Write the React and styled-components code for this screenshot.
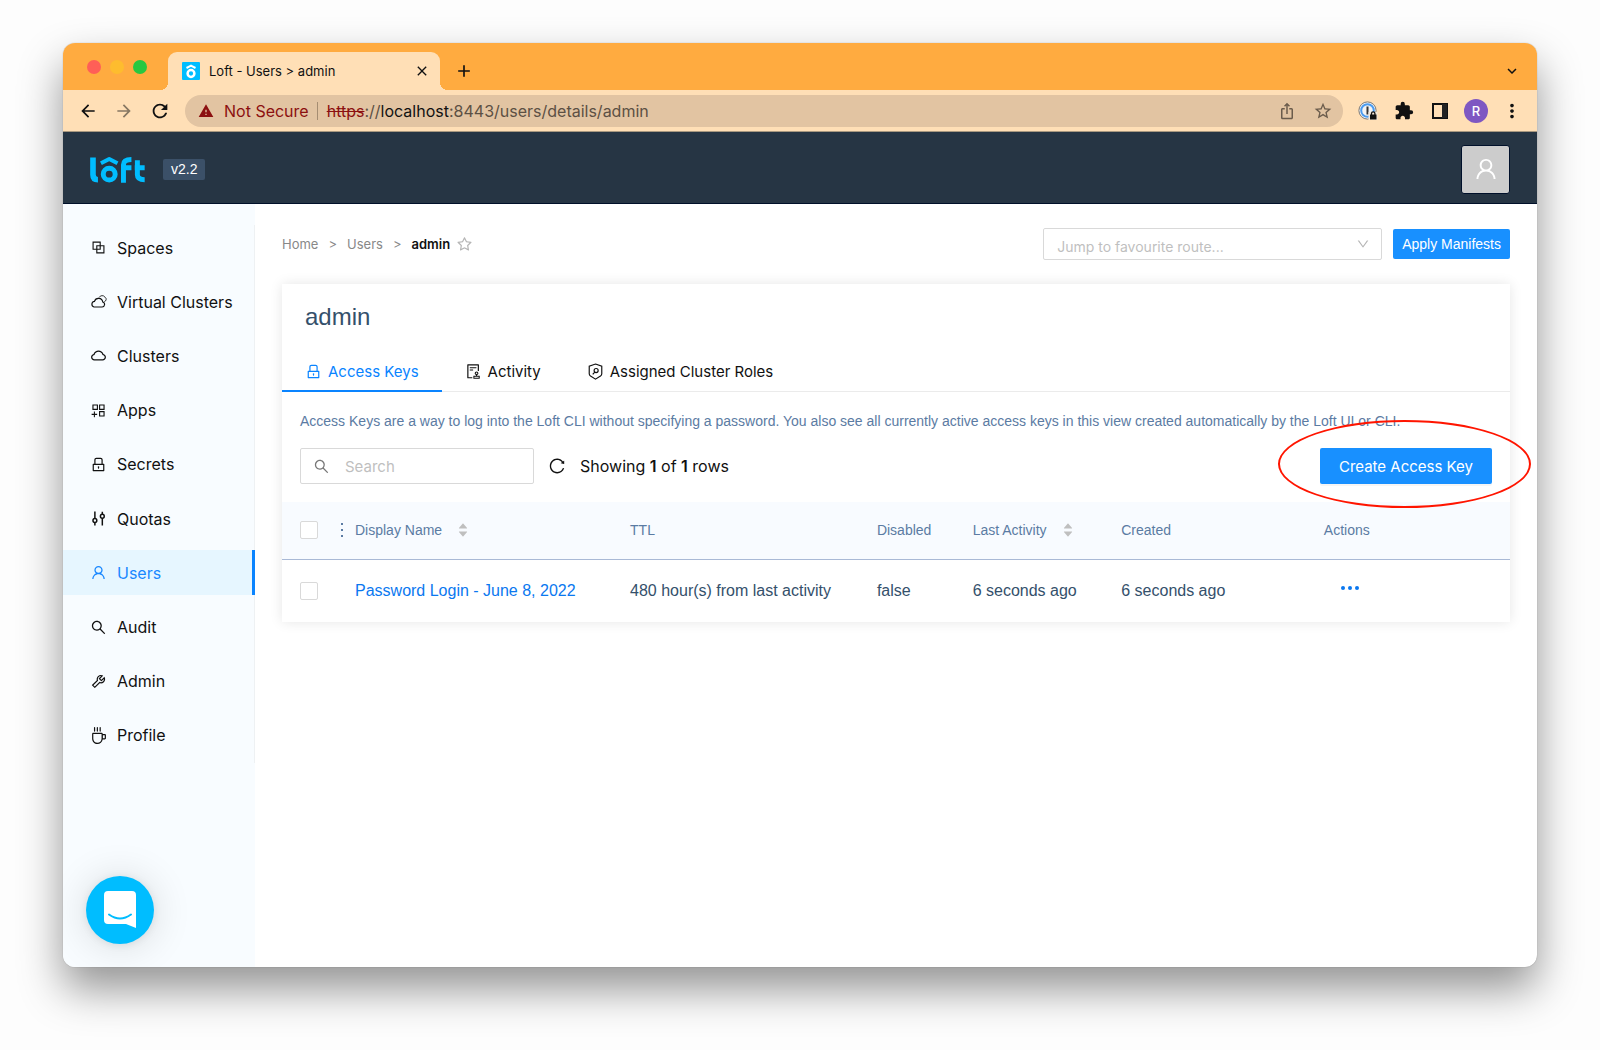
import React, { useState } from 'react';
import styled, { createGlobalStyle } from 'styled-components';
import {
    AiFillCaretDown,
    AiFillCaretUp,
    AiOutlineAppstoreAdd,
    AiOutlineAudit,
    AiOutlineBlock,
    AiOutlineCloud,
    AiOutlineCoffee,
    AiOutlineDown,
    AiOutlineLock,
    AiOutlineReload,
    AiOutlineSearch,
    AiOutlineStar,
    AiOutlineTool,
    AiOutlineUser,
} from 'react-icons/ai';
import {
    MdArrowBack,
    MdArrowForward,
    MdClose,
    MdAdd,
    MdExtension,
    MdIosShare,
    MdKeyboardArrowDown,
    MdMoreVert,
    MdRefresh,
    MdStarOutline,
    MdWarning,
} from 'react-icons/md';

const VirtualClusterIcon = () => (
    <svg viewBox="0 0 16 16" width="1em" height="1em" fill="none" stroke="currentColor">
        <path d="M3.8 13.2h7.6a2.4 2.4 0 0 0 .6-4.7 4 4 0 0 0-7.8-.6 2.7 2.7 0 0 0-.4 5.3z" strokeWidth="1.1" />
        <path d="M8.6 4.2a3.2 3.2 0 0 1 5.5-.3 2.3 2.3 0 0 1-.6 4.2" strokeWidth="0.8" />
    </svg>
);

const QuotaIcon = () => (
    <svg viewBox="0 0 16 16" width="1em" height="1em" fill="none" stroke="currentColor" strokeWidth="1.4">
        <path d="M4.6 1.5v6.6M4.6 11.7v2.8M11.6 14.5V7.7M11.6 4.1V1.7" />
        <circle cx="4.6" cy="9.9" r="1.8" />
        <circle cx="11.6" cy="5.9" r="1.8" />
    </svg>
);

const RolesIcon = () => (
    <svg viewBox="0 0 16 16" width="1em" height="1em" fill="none" stroke="currentColor" strokeWidth="1.1">
        <path d="M8 1l5.900 2v7.200c0 1-.5 1.600-1.200 2.100L8 15.200l-4.700-2.900c-.7-.5-1.200-1.100-1.200-2.100V3z" />
        <circle cx="8.6" cy="7.100" r="1.900" />
        <path d="M7.300 8.500l-1.900 2.200" />
    </svg>
);

const LoftLogo = () => (
    <svg viewBox="0 0 166 80" width="55" height="27" fill="none" stroke="#00bdff" role="img" aria-label="loft">
        <path d="M9 4v52q0 15 15 15" strokeWidth="17" />
        <circle cx="58" cy="54" r="18" strokeWidth="15" />
        <path d="M33 21L58 8l25 13" strokeWidth="12" strokeLinejoin="round" />
        <path d="M101 80V26q0-16 24-16M101 35h24" strokeWidth="15" />
        <path d="M143 12v44q0 15 22 15M135 35h30" strokeWidth="15" />
    </svg>
);

const Favicon = () => (
    <svg viewBox="0 0 18 18" width="18" height="18">
        <rect width="18" height="18" rx="1" fill="#00bdff" />
        <circle cx="9" cy="11.5" r="3.4" fill="none" stroke="#fff" strokeWidth="2.5" />
        <path d="M4.5 6L9 3.6 13.5 6" fill="none" stroke="#fff" strokeWidth="2" strokeLinejoin="round" />
    </svg>
);

const PasswordManagerIcon = () => (
    <svg viewBox="0 0 20 20" width="20" height="20">
        <circle cx="9.5" cy="9.5" r="8.6" fill="#f4f4f4" stroke="#777" />
        <circle cx="9.5" cy="9.5" r="6.3" fill="none" stroke="#4a9bf0" strokeWidth="2" />
        <rect x="8.5" y="5.5" width="2" height="8" fill="#333" />
        <path d="M10.5 11h9v8h-9z" fill="#f4e8da" />
        <path d="M12 13.5h6.5v5H12z" fill="#111" />
        <path d="M13.5 14v-1.500a1.700 1.700 0 0 1 3.400 0V14" fill="none" stroke="#111" strokeWidth="1.3" />
    </svg>
);

const SidePanelIcon = () => (
    <svg viewBox="0 0 16 16" width="16" height="16">
        <path d="M1 1h14v14H1z" fill="none" stroke="#111" strokeWidth="2" />
        <path d="M10 1h5v14h-5z" fill="#222" />
    </svg>
);

const ChatIcon = () => (
    <svg viewBox="0 0 32 38" width="32" height="38">
        <path d="M4 0h24a4 4 0 0 1 4 4v33l-10-4H4a4 4 0 0 1-4-4V4a4 4 0 0 1 4-4z" fill="#fff" />
        <path d="M5 23.5q11 8 22 0" fill="none" stroke="#00bdff" strokeWidth="2" strokeLinecap="round" />
    </svg>
);

const DotsIcon = () => (
    <svg viewBox="0 0 18 4" width="18" height="4" fill="currentColor">
        <circle cx="2" cy="2" r="2" />
        <circle cx="9" cy="2" r="2" />
        <circle cx="16" cy="2" r="2" />
    </svg>
);

const navItems = [
    { name: 'Spaces', icon: AiOutlineBlock },
    { name: 'Virtual Clusters', icon: VirtualClusterIcon },
    { name: 'Clusters', icon: AiOutlineCloud },
    { name: 'Apps', icon: AiOutlineAppstoreAdd },
    { name: 'Secrets', icon: AiOutlineLock },
    { name: 'Quotas', icon: QuotaIcon },
    { name: 'Users', icon: AiOutlineUser },
    { name: 'Audit', icon: AiOutlineSearch },
    { name: 'Admin', icon: AiOutlineTool },
    { name: 'Profile', icon: AiOutlineCoffee },
];

const tabs = [
    { name: 'Access Keys', icon: AiOutlineLock },
    { name: 'Activity', icon: AiOutlineAudit },
    { name: 'Assigned Cluster Roles', icon: RolesIcon },
];

const columns = [
    { name: 'Display Name', width: '22.4%', sortable: true },
    { name: 'TTL', width: '20.1%' },
    { name: 'Disabled', width: '7.8%' },
    { name: 'Last Activity', width: '12.1%', sortable: true },
    { name: 'Created', width: '16.5%' },
    { name: 'Actions' },
];

const rows = [
    {
        name: 'Password Login - June 8, 2022',
        ttl: '480 hour(s) from last activity',
        disabled: 'false',
        lastActivity: '6 seconds ago',
        created: '6 seconds ago',
    },
];

const BrowserChrome = () => (
    <>
        <TabStrip>
            <Lights>
                <Light color="#ff5f57" />
                <Light color="#febc2e" />
                <Light color="#28c840" />
            </Lights>
            <BrowserTab>
                <Favicon />
                <BrowserTabTitle>Loft - Users &gt; admin</BrowserTabTitle>
                <ChromeButton aria-label="Close tab" size={16}><MdClose /></ChromeButton>
            </BrowserTab>
            <StripActions>
                <ChromeButton aria-label="New tab" size={20}><MdAdd /></ChromeButton>
                <ChromeButton aria-label="Search tabs" size={18}><MdKeyboardArrowDown /></ChromeButton>
            </StripActions>
        </TabStrip>
        <Toolbar>
            <ToolbarGroup>
                <ChromeButton aria-label="Back" size={20}><MdArrowBack /></ChromeButton>
                <ChromeButton aria-label="Forward" size={20} faded><MdArrowForward /></ChromeButton>
                <ChromeButton aria-label="Reload" size={22}><MdRefresh /></ChromeButton>
            </ToolbarGroup>
            <AddressBar>
                <MdWarning color="#8c1010" size={16} />
                <NotSecure>Not Secure</NotSecure>
                <Url>
                    <s>https</s>://<b>localhost</b>:8443/users/details/admin
                </Url>
                <Spacer />
                <ChromeButton aria-label="Share" size={18} muted><MdIosShare /></ChromeButton>
                <ChromeButton aria-label="Bookmark" size={20} muted><MdStarOutline /></ChromeButton>
            </AddressBar>
            <ToolbarGroup>
                <ChromeButton aria-label="Password manager" size={20}><PasswordManagerIcon /></ChromeButton>
                <ChromeButton aria-label="Extensions" size={20}><MdExtension /></ChromeButton>
                <ChromeButton aria-label="Side panel" size={16}><SidePanelIcon /></ChromeButton>
                <ProfileButton>R</ProfileButton>
                <ChromeButton aria-label="Menu" size={22}><MdMoreVert /></ChromeButton>
            </ToolbarGroup>
        </Toolbar>
    </>
);

const AccessKeys = () => {
    const [query, setQuery] = useState('');
    return (
        <>
            <Description>
                Access Keys are a way to log into the Loft CLI without specifying a password. You also see all
                currently active access keys in this view created automatically by the Loft UI or CLI.
            </Description>
            <TableTools>
                <SearchBox>
                    <AiOutlineSearch />
                    <input
                        aria-label="Search"
                        placeholder="Search"
                        value={query}
                        onChange={(e) => setQuery(e.target.value)}
                    />
                </SearchBox>
                <RefreshButton aria-label="Refresh"><AiOutlineReload /></RefreshButton>
                <RowCount>Showing <b>1</b> of <b>1</b> rows</RowCount>
                <Spacer />
                <Highlighted>
                    <CreateButton>Create Access Key</CreateButton>
                </Highlighted>
            </TableTools>
            <Table>
                <colgroup>
                    <col style={{ width: 73 }} />
                    {columns.map((column) => (
                        <col key={column.name} style={{ width: column.width }} />
                    ))}
                </colgroup>
                <thead>
                    <tr>
                        <th>
                            <SelectCell>
                                <Checkbox type="checkbox" aria-label="Select all rows" />
                                <Grip viewBox="0 0 4 14">
                                    <path d="M1 0h2v2H1zM1 6h2v2H1zM1 12h2v2H1z" />
                                </Grip>
                            </SelectCell>
                        </th>
                        {columns.map((column) => (
                            <th key={column.name}>
                                <HeadCell>
                                    {column.name}
                                    {column.sortable && (
                                        <Sorter aria-label={`Sort by ${column.name}`}>
                                            <AiFillCaretUp />
                                            <AiFillCaretDown />
                                        </Sorter>
                                    )}
                                </HeadCell>
                            </th>
                        ))}
                    </tr>
                </thead>
                <tbody>
                    {rows.map((row) => (
                        <tr key={row.name}>
                            <td>
                                <SelectCell>
                                    <Checkbox type="checkbox" aria-label={`Select ${row.name}`} />
                                </SelectCell>
                            </td>
                            <td><KeyLink href="#key">{row.name}</KeyLink></td>
                            <td>{row.ttl}</td>
                            <td>{row.disabled}</td>
                            <td>{row.lastActivity}</td>
                            <td>{row.created}</td>
                            <td><RowMenu aria-label="Row actions"><DotsIcon /></RowMenu></td>
                        </tr>
                    ))}
                </tbody>
            </Table>
        </>
    );
};

const App = () => {
    const [tab, setTab] = useState('Access Keys');
    return (
        <Desktop>
            <GlobalStyle />
            <Window>
                <BrowserChrome />
                <Header>
                    <LoftLogo />
                    <Version>v2.2</Version>
                    <Spacer />
                    <Avatar aria-label="Account"><AiOutlineUser /></Avatar>
                </Header>
                <Body>
                    <Sidebar>
                        <Nav>
                            {navItems.map(({ name, icon: Icon }) => (
                                <NavLink key={name} href={`#${name}`} $active={name === 'Users'}>
                                    <Icon />
                                    {name}
                                </NavLink>
                            ))}
                        </Nav>
                        <ChatButton aria-label="Open chat"><ChatIcon /></ChatButton>
                    </Sidebar>
                    <Main>
                        <TopRow>
                            <Breadcrumb>
                                <a href="#home">Home</a>
                                <span>&gt;</span>
                                <a href="#users">Users</a>
                                <span>&gt;</span>
                                <b>admin</b>
                            </Breadcrumb>
                            <FavouriteButton aria-label="Add to favourites"><AiOutlineStar /></FavouriteButton>
                            <Spacer />
                            <RouteSelect>
                                <select aria-label="Jump to favourite route">
                                    <option>Jump to favourite route...</option>
                                </select>
                                <AiOutlineDown />
                            </RouteSelect>
                            <ApplyButton>Apply Manifests</ApplyButton>
                        </TopRow>
                        <Card>
                            <Title>admin</Title>
                            <Tabs role="tablist">
                                {tabs.map(({ name, icon: Icon }) => (
                                    <Tab
                                        key={name}
                                        role="tab"
                                        aria-selected={tab === name}
                                        $active={tab === name}
                                        onClick={() => setTab(name)}
                                    >
                                        <Icon />
                                        {name}
                                    </Tab>
                                ))}
                            </Tabs>
                            <AccessKeys />
                        </Card>
                    </Main>
                </Body>
            </Window>
        </Desktop>
    );
};

export default App;

const GlobalStyle = createGlobalStyle`
    * {
        box-sizing: border-box;
    }

    body {
        margin: 0;
        background: #fdfdfd;
        font-family: Inter, "Liberation Sans", sans-serif;
        color: #111;
    }

    button {
        padding: 0;
        border: 0;
        background: none;
        font: inherit;
        color: inherit;
        cursor: pointer;
    }

    a {
        color: inherit;
        text-decoration: none;
    }

    svg {
        flex: none;
    }
`;

const Desktop = styled.div`
    min-height: 100vh;
    padding: 43px 63px 83px;
    display: flex;
`;

const Window = styled.div`
    flex: 1;
    min-width: 0;
    display: flex;
    flex-direction: column;
    border-radius: 12px;
    overflow: hidden;
    background: #fff;
    box-shadow: 0 0 1px rgba(0, 0, 0, 0.4), 0 22px 44px rgba(0, 0, 0, 0.42);
`;

const Spacer = styled.div`
    flex: 1;
`;

const TabStrip = styled.div`
    height: 47px;
    padding: 0 14px 0 24px;
    display: flex;
    align-items: center;
    background: #ffab40;
`;

const Lights = styled.div`
    display: flex;
    gap: 9px;
    margin-right: 21px;
`;

const Light = styled.span`
    width: 14px;
    height: 14px;
    border-radius: 50%;
    background: ${(props) => props.color};
`;

const BrowserTab = styled.div`
    position: relative;
    align-self: flex-end;
    width: 272px;
    height: 38px;
    padding: 0 7px 0 14px;
    display: flex;
    align-items: center;
    border-radius: 9px 9px 0 0;
    background: #ffdfb6;

    &::before,
    &::after {
        content: '';
        position: absolute;
        bottom: 0;
        width: 8px;
        height: 8px;
    }

    &::before {
        right: 100%;
        background: radial-gradient(circle at 0 0, transparent 8px, #ffdfb6 8px);
    }

    &::after {
        left: 100%;
        background: radial-gradient(circle at 100% 0, transparent 8px, #ffdfb6 8px);
    }
`;

const StripActions = styled.div`
    flex: 1;
    align-self: flex-end;
    height: 38px;
    padding-left: 13px;
    display: flex;
    align-items: center;
    justify-content: space-between;
`;

const BrowserTabTitle = styled.span`
    flex: 1;
    margin-left: 9px;
    font-size: 13px;
`;

const ChromeButton = styled.button.withConfig({
    shouldForwardProp: (prop) => !['size', 'faded', 'muted'].includes(prop),
})`
    width: 22px;
    height: 22px;
    display: flex;
    align-items: center;
    justify-content: center;
    font-size: ${(props) => props.size}px;
    color: ${(props) => (props.muted ? '#6b5c4c' : '#111')};
    opacity: ${(props) => (props.faded ? 0.5 : 1)};
`;

const Toolbar = styled.div`
    height: 42px;
    padding: 0 14px;
    display: flex;
    align-items: center;
    gap: 14px;
    background: #ffdfb6;
    border-bottom: 1px solid #a89880;
`;

const ToolbarGroup = styled.div`
    display: flex;
    align-items: center;
    gap: 14px;
`;

const AddressBar = styled.div`
    flex: 1;
    height: 32px;
    padding: 0 9px 0 13px;
    display: flex;
    align-items: center;
    border-radius: 16px;
    background: #e2c4a2;
    font-size: 16px;

    button + button {
        margin-left: 14px;
    }
`;

const NotSecure = styled.span`
    margin-left: 10px;
    padding-right: 8px;
    border-right: 1px solid #a58d72;
    line-height: 18px;
    color: #8c1010;
`;

const Url = styled.span`
    margin-left: 9px;
    color: #5c5044;

    s {
        color: #8c1010;
    }

    b {
        font-weight: 400;
        color: #111;
    }
`;

const ProfileButton = styled.button`
    && {
        width: 24px;
        height: 24px;
        margin: 0 -1px;
        border-radius: 50%;
        background: #7e57c2;
        color: #fff;
        font-size: 13px;
        font-weight: 500;
    }
`;

const Header = styled.header`
    height: 72px;
    padding: 3px 27px 0;
    display: flex;
    align-items: center;
    background: #263544;
    border-bottom: 1px solid #00102a;
`;

const Version = styled.span`
    margin-left: 18px;
    padding: 0 8px;
    border-radius: 2px;
    background: #3b5068;
    color: #fff;
    font-family: "Liberation Sans", sans-serif;
    font-size: 14px;
    line-height: 21px;
`;

const Avatar = styled.button`
    && {
        width: 49px;
        height: 49px;
        display: flex;
        align-items: center;
        justify-content: center;
        border: 1px solid #00102a;
        border-radius: 3px;
        background: #ccc;
        color: #fff;
        font-size: 26px;
    }
`;

const Body = styled.div`
    flex: 1;
    display: flex;
`;

const Sidebar = styled.aside`
    flex: none;
    width: 192px;
    padding: 21px 0 23px;
    display: flex;
    flex-direction: column;
    justify-content: space-between;
    background: #f8fcff;
`;

const Nav = styled.nav`
    min-height: 538px;
    padding-bottom: 5px;
    display: flex;
    flex-direction: column;
    justify-content: space-between;
    border-right: 1px solid #eef1f3;
`;

const NavLink = styled.a`
    height: 45px;
    margin-right: -1px;
    padding-left: 27px;
    display: flex;
    align-items: center;
    gap: 10px;
    border-right: ${(props) => (props.$active ? '3px solid #0a84ff' : '0')};
    background: ${(props) => (props.$active ? '#e6f6ff' : 'transparent')};
    color: ${(props) => (props.$active ? '#1a88ff' : '#111')};
    font-size: 16px;

    svg {
        font-size: 17px;
    }
`;

const ChatButton = styled.button`
    && {
        width: 68px;
        height: 68px;
        margin-left: 23px;
        display: flex;
        align-items: center;
        justify-content: center;
        border-radius: 50%;
        background: #00bdff;
        box-shadow: 0 2px 40px rgba(0, 0, 0, 0.14), 0 1px 8px rgba(0, 0, 0, 0.08);
    }
`;

const Main = styled.main`
    flex: 1;
    min-width: 0;
    padding: 24px 27px;
`;

const TopRow = styled.div`
    height: 32px;
    margin-bottom: 24px;
    display: flex;
    align-items: center;
`;

const Breadcrumb = styled.nav`
    display: flex;
    gap: 10px;
    color: #888;
    font-size: 13px;

    b {
        font-weight: 600;
        color: #111;
    }
`;

const FavouriteButton = styled.button`
    && {
        margin-left: 6px;
        display: flex;
        color: #b5b5b5;
        font-size: 17px;
    }
`;

const RouteSelect = styled.div`
    position: relative;
    width: 339px;

    select {
        width: 100%;
        height: 32px;
        padding: 4px 32px 0 13px;
        appearance: none;
        border: 1px solid #d9d9d9;
        border-radius: 2px;
        background: #fff;
        color: #bfbfbf;
        font-family: inherit;
        font-size: 14px;
    }

    svg {
        position: absolute;
        top: 9px;
        right: 12px;
        color: #b5b5b5;
        font-size: 14px;
        pointer-events: none;
    }
`;

const ApplyButton = styled.button`
    && {
        height: 30px;
        margin-left: 11px;
        padding: 0 9px;
        border-radius: 2px;
        background: #1890ff;
        color: #fff;
        font-family: "Liberation Sans", sans-serif;
        font-size: 14px;
    }
`;

const Card = styled.section`
    background: #fff;
    box-shadow: 0 0 12px rgba(0, 0, 0, 0.1);
`;

const Title = styled.h1`
    margin: 0;
    padding: 18px 23px 20px;
    font-family: "Liberation Sans", sans-serif;
    font-size: 24px;
    font-weight: 400;
    line-height: 30px;
    color: #34506b;
`;

const Tabs = styled.div`
    display: flex;
    border-bottom: 1px solid #ebebeb;
`;

const Tab = styled.button`
    && {
        height: 40px;
        margin-bottom: -1px;
        padding: 0 23px;
        display: flex;
        align-items: center;
        gap: 6px;
        border-bottom: 2px solid ${(props) => (props.$active ? '#0a84ff' : 'transparent')};
        color: ${(props) => (props.$active ? '#0a84ff' : '#111')};
        font-size: 15px;
    }

    svg {
        font-size: 17px;
    }
`;

const Description = styled.p`
    margin: 0;
    padding: 20px 18px 0;
    font-family: "Liberation Sans", sans-serif;
    font-size: 14px;
    line-height: 18px;
    color: #5b7ba3;
`;

const TableTools = styled.div`
    padding: 18px;
    display: flex;
    align-items: center;
`;

const SearchBox = styled.label`
    width: 234px;
    height: 36px;
    padding: 0 12px;
    display: flex;
    align-items: center;
    gap: 15px;
    border: 1px solid #d9d9d9;
    border-radius: 2px;
    color: #777;

    svg {
        font-size: 17px;
    }

    input {
        flex: 1;
        min-width: 0;
        padding: 0;
        border: 0;
        outline: 0;
        background: none;
        font-family: inherit;
        font-size: 15px;
    }

    input::placeholder {
        color: #bfbfbf;
    }
`;

const RefreshButton = styled.button`
    && {
        margin: 0 14px;
        display: flex;
        font-size: 18px;
    }
`;

const RowCount = styled.span`
    font-size: 16px;

    b {
        font-weight: 600;
    }
`;

const Highlighted = styled.div`
    position: relative;

    &::after {
        content: '';
        position: absolute;
        top: -28px;
        right: -39px;
        bottom: -24px;
        left: -42px;
        border: 2px solid #ff1500;
        border-radius: 50%;
        pointer-events: none;
    }
`;

const CreateButton = styled.button`
    && {
        height: 36px;
        padding: 0 19px;
        border-radius: 2px;
        background: #1890ff;
        box-shadow: 0 2px 0 rgba(0, 0, 0, 0.04);
        color: #fff;
        font-size: 15px;
    }
`;

const Table = styled.table`
    width: 100%;
    table-layout: fixed;
    border-collapse: collapse;
    font-family: "Liberation Sans", sans-serif;

    th,
    td {
        padding: 0;
        text-align: left;
        white-space: nowrap;
    }

    th {
        height: 57px;
        border-bottom: 1px solid #a9b9d6;
        background: #f8fbff;
        color: #5b7ba3;
        font-size: 14px;
        font-weight: 400;
    }

    td {
        height: 63px;
        color: #34506b;
        font-size: 16px;
    }
`;

const SelectCell = styled.div`
    padding-left: 18px;
    display: flex;
    align-items: center;
    gap: 22px;
`;

const HeadCell = styled.div`
    display: flex;
    align-items: center;
    gap: 15px;
`;

const Checkbox = styled.input`
    width: 18px;
    height: 18px;
    margin: 0;
    appearance: none;
    border: 1px solid #d9d9d9;
    border-radius: 2px;
    background: #fff;

    &:checked {
        background: #1890ff;
    }
`;

const Grip = styled.svg`
    width: 4px;
    height: 14px;
    fill: #5b7ba3;
`;

const Sorter = styled.button`
    && {
        display: flex;
        flex-direction: column;
        color: #bfbfbf;
        font-size: 12px;
    }

    svg + svg {
        margin-top: -4px;
    }
`;

const KeyLink = styled.a`
    color: #0a78f0;
`;

const RowMenu = styled.button`
    && {
        margin-left: 17px;
        padding-bottom: 6px;
        display: block;
        color: #0a78f0;
    }

    svg {
        display: block;
    }
`;
